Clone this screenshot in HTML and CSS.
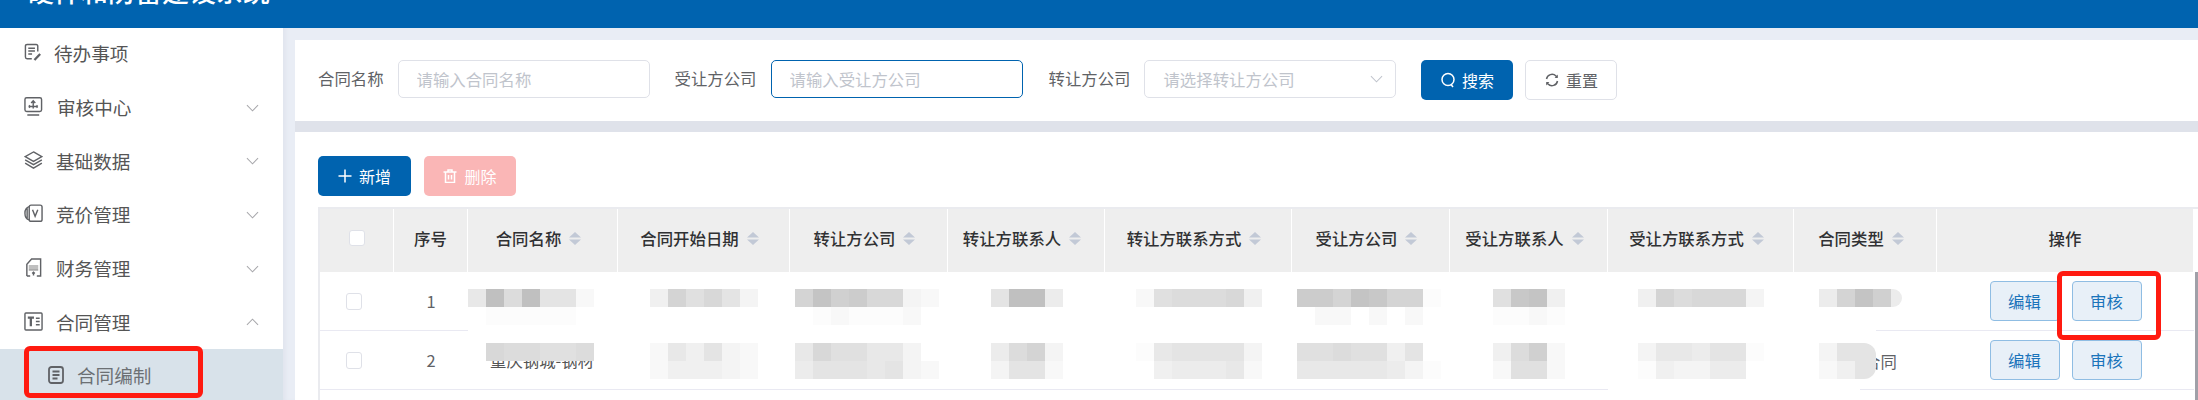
FILE: index.html
```html
<!DOCTYPE html>
<html lang="zh-CN">
<head>
<meta charset="utf-8">
<title>合同编制</title>
<link rel="stylesheet" href="styles.css">
</head>
<body>
<div class="app">
  <header class="topbar"><div class="title">硬件和防雷建设系统</div></header>
  <div class="main">
    <aside class="side">
      <nav class="menu">
        <div class="item first">
          <svg class="ico" viewBox="0 0 20 20"><path d="M14.5 9V3.2c0-1-.6-1.7-1.7-1.7H3.2c-1 0-1.7.7-1.7 1.7v11.6c0 1 .7 1.7 1.7 1.7h5"/><path d="M4.5 5.5h7M4.5 8.5h7M4.5 11.5h4"/><path class="thick" d="M11 18l6-6.5"/></svg>
          <span class="txt t0">待办事项</span>
        </div>
        <div class="item">
          <svg class="ico" viewBox="0 0 20 20"><rect x="1" y=".8" width="17.5" height="14.5" rx="1.8"/><path d="M3.5 19h12.5M9.7 4v8M7.5 6.2l2.2-2.2 2.2 2.2M5 10h9.5M5 10l1.4-1.2M5 10l1.4 1.2M14.5 10l-1.4-1.2M14.5 10l-1.4 1.2"/></svg>
          <span class="txt t1">审核中心</span>
          <svg class="chev" viewBox="0 0 14 8"><path d="M1 1l6 6 6-6"/></svg>
        </div>
        <div class="item">
          <svg class="ico" viewBox="0 0 20 20"><path d="M10 1l8.8 5-8.8 5-8.8-5z"/><path d="M1.2 9.4l8.8 5 8.8-5M1.2 12.8l8.8 5.2 8.8-5.2"/></svg>
          <span class="txt">基础数据</span>
          <svg class="chev" viewBox="0 0 14 8"><path d="M1 1l6 6 6-6"/></svg>
        </div>
        <div class="item">
          <svg class="ico" viewBox="0 0 20 20"><rect x="5.5" y="1.2" width="13.5" height="17" rx="2"/><path d="M5.5 2.8C2.5 3.5 1 6 1 9.7s1.500 6.300 4.500 7M3.300 4.500v10.500M9 6l2.700 7L14.500 6"/></svg>
          <span class="txt">竞价管理</span>
          <svg class="chev" viewBox="0 0 14 8"><path d="M1 1l6 6 6-6"/></svg>
        </div>
        <div class="item">
          <svg class="ico" viewBox="0 0 20 20"><path d="M3 19V6.500L8 1h9.500v18h-4M6.500 19H3"/><path class="soft" d="M5 8.500h10M5 10.500h10M5 12.500h10"/><path d="M10 18.500v-3.500M8.600 16.400l1.400-1.400 1.400 1.400"/></svg>
          <span class="txt">财务管理</span>
          <svg class="chev" viewBox="0 0 14 8"><path d="M1 1l6 6 6-6"/></svg>
        </div>
        <div class="item">
          <svg class="ico" viewBox="0 0 20 20"><rect x="1" y="1" width="18" height="18" rx="1"/><path class="thick" d="M4 6h6.500M7.200 6v9"/><path d="M12.500 6.500h4M12.500 10h4M12.500 13.500h4"/></svg>
          <span class="txt">合同管理</span>
          <svg class="chev" viewBox="0 0 14 8"><path d="M1 7l6-6 6 6"/></svg>
        </div>
        <div class="sub">
          <svg class="ico-sub" viewBox="0 0 16 18"><rect x="1" y="1" width="14" height="16" rx="2.500"/><path d="M4.500 5.500h7M4.500 9h7M4.500 12.500h5"/></svg>
          <span class="txt">合同编制</span>
          <div class="redbox side-mark"></div>
        </div>
      </nav>
    </aside>
    <main class="content">
      <section class="search">
        <label class="lbl">合同名称</label>
        <input class="field" placeholder="请输入合同名称">
        <label class="lbl next">受让方公司</label>
        <input class="field focus" placeholder="请输入受让方公司">
        <label class="lbl next">转让方公司</label>
        <div class="field select"><span>请选择转让方公司</span><svg class="chev sel" viewBox="0 0 14 8"><path d="M1 1l6 6 6-6"/></svg></div>
        <button class="btn primary search-btn"><svg class="bi" viewBox="0 0 14 16"><circle cx="7" cy="7.500" r="6"/><path d="M10 12.500l2 2.500"/></svg>搜索</button>
        <button class="btn plain"><svg class="bi" viewBox="0 0 14 14"><path d="M1.500 6A5.600 5.600 0 0 1 11 3l1 1.200M12.500 8A5.600 5.600 0 0 1 3 11l-1-1.200"/><path class="fill" d="M12.800 1.500v3.500H9.600zM1.200 12.500V9h3.200z"/></svg>重置</button>
      </section>
      <section class="panel">
        <div class="tools">
          <button class="btn primary wide"><svg class="bi" viewBox="0 0 14 14"><path d="M7 .5v13M.5 7h13"/></svg>新增</button>
          <button class="btn danger"><svg class="bi" viewBox="0 0 14 14"><path d="M.5 3h13M5 3V1h4v2M2.500 3v10.500h9V3M5.500 6v4.500M8.500 6v4.500"/></svg>删除</button>
        </div>
        <div class="table">
          <div class="th"><span class="box"></span></div>
          <div class="th"><span>序号</span></div>
          <div class="th sort"><span>合同名称</span><svg class="si" viewBox="0 0 12 13"><path d="M6 0l6 5.500H0zM6 13l6-5.500H0z"/></svg></div>
          <div class="th sort"><span>合同开始日期</span><svg class="si" viewBox="0 0 12 13"><path d="M6 0l6 5.500H0zM6 13l6-5.500H0z"/></svg></div>
          <div class="th sort"><span>转让方公司</span><svg class="si" viewBox="0 0 12 13"><path d="M6 0l6 5.500H0zM6 13l6-5.500H0z"/></svg></div>
          <div class="th sort"><span>转让方联系人</span><svg class="si" viewBox="0 0 12 13"><path d="M6 0l6 5.500H0zM6 13l6-5.500H0z"/></svg></div>
          <div class="th sort"><span>转让方联系方式</span><svg class="si" viewBox="0 0 12 13"><path d="M6 0l6 5.500H0zM6 13l6-5.500H0z"/></svg></div>
          <div class="th sort"><span>受让方公司</span><svg class="si" viewBox="0 0 12 13"><path d="M6 0l6 5.500H0zM6 13l6-5.500H0z"/></svg></div>
          <div class="th sort"><span>受让方联系人</span><svg class="si" viewBox="0 0 12 13"><path d="M6 0l6 5.500H0zM6 13l6-5.500H0z"/></svg></div>
          <div class="th sort"><span>受让方联系方式</span><svg class="si" viewBox="0 0 12 13"><path d="M6 0l6 5.500H0zM6 13l6-5.500H0z"/></svg></div>
          <div class="th sort"><span>合同类型</span><svg class="si" viewBox="0 0 12 13"><path d="M6 0l6 5.500H0zM6 13l6-5.500H0z"/></svg></div>
          <div class="th"><span>操作</span></div>

          <div class="td line r1c"><span class="box row"></span></div>
          <div class="td line r1c">1</div>
          <div class="td m1 left"><div class="mos"><div class="ln"><i class="e8"></i><i class="c0"></i><i class="dc"></i><i class="c0"></i><i class="e4"></i><i class="e4"></i><i class="f8"></i></div><div class="ln"><i></i><i class="fc"></i><i class="fc"></i><i class="fc"></i><i class="fc"></i><i class="fc"></i></div></div></div>
          <div class="td m1"><div class="mos"><div class="ln"><i class="f0"></i><i class="d4"></i><i class="e0"></i><i class="d8"></i><i class="e4"></i><i class="f4"></i></div></div></div>
          <div class="td m1"><div class="mos nudge"><div class="ln"><i class="d4"></i><i class="c4"></i><i class="d0"></i><i class="cc"></i><i class="d8"></i><i class="d8"></i><i class="f4"></i><i class="f8"></i></div><div class="ln"><i></i><i class="fc"></i><i class="f8"></i><i class="fc"></i><i class="fc"></i><i class="fc"></i><i class="f8"></i></div></div></div>
          <div class="td m1"><div class="mos"><div class="ln"><i class="e4"></i><i class="c0"></i><i class="c0"></i><i class="ec"></i></div></div></div>
          <div class="td m1"><div class="mos"><div class="ln"><i class="f8"></i><i class="e0"></i><i class="dc"></i><i class="dc"></i><i class="dc"></i><i class="d8"></i><i class="f0"></i></div></div></div>
          <div class="td m1"><div class="mos nudge"><div class="ln"><i class="cc"></i><i class="cc"></i><i class="d4"></i><i class="c4"></i><i class="c8"></i><i class="d4"></i><i class="d4"></i><i class="fc"></i></div><div class="ln"><i></i><i class="f8"></i><i class="f8"></i><i></i><i class="f8"></i><i></i><i class="f8"></i></div></div></div>
          <div class="td m1"><div class="mos"><div class="ln"><i class="e0"></i><i class="c8"></i><i class="c4"></i><i class="f0"></i></div><div class="ln"><i class="fc"></i><i class="fc"></i><i class="f8"></i><i class="fc"></i></div></div></div>
          <div class="td m1"><div class="mos"><div class="ln"><i class="f0"></i><i class="d4"></i><i class="dc"></i><i class="d8"></i><i class="d8"></i><i class="d8"></i><i class="f4"></i></div></div></div>
          <div class="td m1 left type part-a"><div class="mos round"><div class="ln"><i class="ec"></i><i class="d4"></i><i class="c4"></i><i class="d0"></i><i class="ec short"></i></div></div></div>
          <div class="td line acts r1c"><button class="act">编辑</button><button class="act">审核</button><div class="redbox act-mark"></div></div>

          <div class="td line"><span class="box row"></span></div>
          <div class="td line">2</div>
          <div class="td m2 line left"><div class="mos"><div class="ln"><i></i><i class="d8"></i><i class="dc"></i><i class="dc"></i><i class="e0"></i><i class="e0"></i><i class="dc"></i></div><div class="clip"><span>重庆钢城-钢材</span></div></div></div>
          <div class="td m2 line"><div class="mos"><div class="ln"><i class="f8"></i><i class="e8"></i><i class="f0"></i><i class="e4"></i><i class="f4"></i><i class="f8"></i></div><div class="ln"><i class="f8"></i><i class="f0"></i><i class="f0"></i><i class="f0"></i><i class="f4"></i><i class="f8"></i></div></div></div>
          <div class="td m2 line"><div class="mos nudge"><div class="ln"><i class="e8"></i><i class="d8"></i><i class="e0"></i><i class="e0"></i><i class="e8"></i><i class="e8"></i><i class="f4"></i></div><div class="ln"><i class="ec"></i><i class="e4"></i><i class="e4"></i><i class="e4"></i><i class="e8"></i><i class="e4"></i><i class="f4"></i><i class="f8"></i></div></div></div>
          <div class="td m2 line"><div class="mos"><div class="ln"><i class="ec"></i><i class="dc"></i><i class="d4"></i><i class="f4"></i></div><div class="ln"><i class="f4"></i><i class="e4"></i><i class="e4"></i><i class="f8"></i></div></div></div>
          <div class="td m2 line"><div class="mos"><div class="ln"><i class="fc"></i><i class="e8"></i><i class="e4"></i><i class="e4"></i><i class="e4"></i><i class="e4"></i><i class="f4"></i></div><div class="ln"><i></i><i class="f0"></i><i class="ec"></i><i class="ec"></i><i class="ec"></i><i class="e8"></i><i class="f8"></i></div></div></div>
          <div class="td m2 line"><div class="mos nudge"><div class="ln"><i class="e0"></i><i class="e0"></i><i class="dc"></i><i class="e0"></i><i class="e0"></i><i class="f0"></i><i class="e4"></i></div><div class="ln"><i class="e8"></i><i class="e8"></i><i class="e8"></i><i class="e8"></i><i class="e8"></i><i class="ec"></i><i class="f4"></i><i class="fc"></i></div></div></div>
          <div class="td m2 line"><div class="mos"><div class="ln"><i class="f0"></i><i class="dc"></i><i class="d0"></i><i class="f8"></i></div><div class="ln"><i class="f8"></i><i class="e0"></i><i class="e0"></i><i class="f8"></i></div></div></div>
          <div class="td m2"><div class="mos"><div class="ln"><i class="f4"></i><i class="e8"></i><i class="e8"></i><i class="ec"></i><i class="e4"></i><i class="e4"></i><i class="fc"></i></div><div class="ln"><i class="fc"></i><i class="f0"></i><i class="f4"></i><i class="f4"></i><i class="ec"></i><i class="ec"></i></div></div></div>
          <div class="td m2 left type part-b"><div class="mos round"><div class="ln"><i class="f4"></i><i class="e4"></i><i class="e4 short2"></i></div><div class="ln"><i class="f8"></i><i class="f0"></i><i class="e4 short2"></i></div></div><span class="tail">合同</span></div>
          <div class="td line acts"><button class="act">编辑</button><button class="act">审核</button></div>

          <div class="scroll"></div>
        </div>
      </section>
    </main>
  </div>
</div>
</body>
</html>
```
FILE: styles.css
```css
* { box-sizing: border-box; }
html, body { margin: 0; height: 100%; overflow: hidden; }
body { font-family: "Noto Sans CJK SC", "Noto Sans", sans-serif; font-size: 16.4px; color: #606266; background: #e9edf5; }
button, input { font-family: inherit; font-size: inherit; }

.app { height: 100vh; display: flex; flex-direction: column; }
.topbar { height: 28px; flex: none; background: #0063af; overflow: hidden; }
.title { margin: -23px 0 0 27px; font-size: 27px; line-height: 27px; font-weight: 500; color: #fff; white-space: nowrap; }

.main { flex: 1; display: flex; min-height: 0; }
.side { width: 283px; flex: none; background: #fff; }
.menu { margin-top: -1px; }
.item { height: 53.7px; display: flex; align-items: center; position: relative; padding: 0 0 2px 24px; font-size: 18.6px; color: #555; }
.txt { margin-left: 13px; white-space: nowrap; }
.t0 { margin-left: 11px; }
.t1 { margin-left: 14px; }
.ico { width: 19px; height: 19px; flex: none; fill: none; stroke: #606266; stroke-width: 1.5; }
.thick { stroke-width: 2.4; }
.soft { stroke: #aaa; stroke-width: 1.6; }
.chev { width: 13px; height: 8px; fill: none; stroke: #a8a8ac; stroke-width: 1.1; position: absolute; left: 246px; top: 23px; }
.sub { height: 53.7px; display: flex; align-items: center; padding: 0 0 2px 48px; background: #d8e2ea; font-size: 18.6px; color: #6c7074; position: relative; }
.ico-sub { width: 16px; height: 18px; flex: none; fill: none; stroke: #606266; stroke-width: 1.8; }
.redbox { position: absolute; border: 5px solid #ff1a10; border-radius: 6px; z-index: 5; pointer-events: none; }
.side-mark { left: 24px; top: -3px; width: 179px; height: 52px; }

.content { flex: 1; min-width: 0; padding: 12px 0 0 12px; display: flex; flex-direction: column; box-shadow: inset 4px 0 4px -2px #dfe3ec; }
.search { height: 81px; flex: none; background: #fff; display: flex; align-items: flex-start; padding: 20px 0 0 23px; margin-bottom: 11px; box-shadow: 0 11px 0 #dfe2ea; }
.lbl { line-height: 37px; margin-right: 14px; white-space: nowrap; }
.next { margin-left: 25px; margin-right: 14px; }
.field { width: 252px; height: 38px; border: 1.5px solid #dfe1e8; border-radius: 5px; padding: 0 18px; background: #fff; color: #606266; outline: none; }
.field::placeholder { color: #c0c4cc; opacity: 1; }
.focus { border-color: #0063af; margin-right: 1px; }
.select { display: flex; align-items: center; color: #c0c4cc; position: relative; }
.chev.sel { left: 225px; top: 14px; stroke: #c0c4cc; }

.btn { width: 92px; height: 40px; border-radius: 5px; border: 1px solid transparent; display: inline-flex; align-items: center; justify-content: center; gap: 7px; padding: 0; font-size: 16px; }
.bi { width: 14px; height: 14px; fill: none; stroke: currentColor; stroke-width: 1.5; flex: none; }
.bi .fill { fill: currentColor; stroke: none; }
.primary { background: #0063af; color: #fff; }
.wide { width: 93px; }
.search-btn { margin-left: 25px; }
.search-btn .bi { height: 16px; }
.plain { background: #fff; color: #606266; border: 1.5px solid #dfe1e8; margin-left: 12px; }
.danger { background: #fab6b6; color: #fff; margin-left: 13px; }

.panel { flex: 1; min-height: 0; background: #fff; padding: 24px 0 0 23px; display: flex; flex-direction: column; }
.tools { display: flex; flex: none; margin-bottom: 11px; }
.table { flex: 1; display: grid; grid-template-columns: 74px 74px 150px 172px 158px 157px 187px 158px 158px 186px 143px 257px; grid-template-rows: 63px 59px 59px; align-content: start; border-top: 2px solid #eaebef; border-left: 2px solid #eaebef; position: relative; }
.th { background: #eee; border-right: 1px solid #fff; display: flex; align-items: center; justify-content: center; gap: 8px; color: #303133; padding-bottom: 5px; font-weight: 500; }
.th.sort { padding-right: 8px; }
.si { width: 12px; height: 13px; fill: #c2c9d6; flex: none; }
.box { width: 16px; height: 16px; background: #fff; border: 1px solid #dfe1e8; border-radius: 3px; display: block; }
.box.row { margin-right: 6px; height: 17px; }
.td { display: flex; justify-content: center; align-items: center; position: relative; color: #606266; }
.line { border-bottom: 1px solid #e9e9f2; }
.m1 { align-items: flex-start; padding-top: 17px; }
.m2 { align-items: flex-start; padding-top: 12px; }
.left { justify-content: flex-start; }
.type { padding-left: 25px; }
.part-a { background: linear-gradient(#e9e9f2, #e9e9f2) right bottom / 43% 1px no-repeat; }
.part-b { background: linear-gradient(#e9e9f2, #e9e9f2) right bottom / 54% 1px no-repeat; }
.mos { flex: none; position: relative; z-index: 1; }
.nudge { margin-left: -5px; }
.ln { display: flex; height: 18px; }
.ln i { width: 18px; height: 18px; flex: none; }
.ln i.short { width: 11px; }
.ln i.short2 { width: 21px; }
.round .ln:first-child i:last-child { border-top-right-radius: 12px; }
.round .ln:last-child i:last-child { border-bottom-right-radius: 12px; }
.clip { height: 8px; overflow: hidden; font-size: 16.4px; line-height: 18px; color: #555; margin-left: 22px; white-space: nowrap; }
.clip span { display: block; margin-top: -10px; }
.tail { margin: 0 0 0 -12px; padding-top: 7px; line-height: 22px; color: #606266; }
.acts { gap: 12px; }
.act { width: 70px; height: 40px; padding: 0; background: #e8f0f8; border: 1px solid #8fbde3; border-radius: 4px; color: #1a74bb; font-size: 16.4px; }
.act-mark { left: 120px; top: -1px; width: 104px; height: 69px; }
.scroll { position: absolute; right: 0; top: 63px; bottom: 0; width: 3px; background: #a0a0a8; }

.c0 { background: #c0c0c0; } .c4 { background: #c4c4c4; } .c8 { background: #c8c8c8; } .cc { background: #ccc; }
.d0 { background: #d0d0d0; } .d4 { background: #d4d4d4; } .d8 { background: #d8d8d8; } .dc { background: #dcdcdc; }
.e0 { background: #e0e0e0; } .e4 { background: #e4e4e4; } .e8 { background: #e8e8e8; } .ec { background: #ececec; }
.f0 { background: #f0f0f0; } .f4 { background: #f4f4f4; } .f8 { background: #f8f8f8; } .fc { background: #fcfcfc; }
```
